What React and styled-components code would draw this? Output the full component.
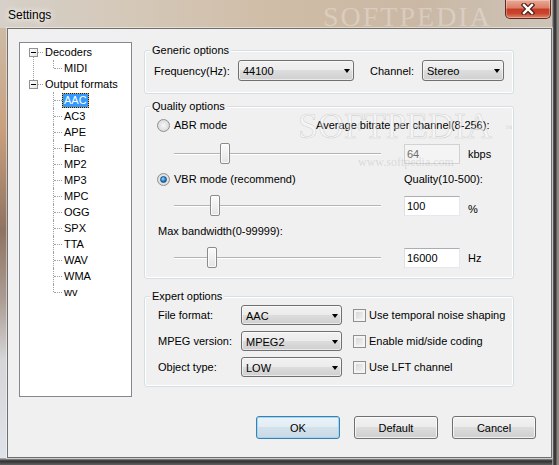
import React from 'react'
import styled, { createGlobalStyle, css } from 'styled-components'

const GlobalStyle = createGlobalStyle`
  html, body {
    margin: 0;
    padding: 0;
  }
  body {
    font-family: "Liberation Sans", Arial, sans-serif;
    font-size: 11px;
    color: #000;
  }
`

const treeData = [
  { label: 'Decoders', children: ['MIDI'] },
  {
    label: 'Output formats',
    children: ['AAC', 'AC3', 'APE', 'Flac', 'MP2', 'MP3', 'MPC', 'OGG', 'SPX', 'TTA', 'WAV', 'WMA', 'wv'],
  },
]

const faceGradient = 'linear-gradient(180deg, #f2f2f2 0%, #ebebeb 50%, #dddddd 50%, #cfcfcf 100%)'

const Window = styled.div`
  position: relative;
  width: 559px;
  height: 465px;
  box-sizing: border-box;
  padding: 0 7px 7px 7px;
  display: flex;
  flex-direction: column;
  overflow: hidden;
  background:
    linear-gradient(90deg, transparent 552px, #b3aca6 552px, #3a3a3a 554px, #3a3a3a 556px, #8f8883 557px),
    linear-gradient(180deg, transparent 458px, #bdbdbd 458px, #2f2f2f 461px, #626262 465px),
    linear-gradient(90deg, #d6d0c8 0%, #d4c7b7 25%, #cfbca6 50%, #cab8a5 75%, #cdc4b9 100%) top / 100% 28px no-repeat,
    linear-gradient(180deg, #cdbba6 28px, #c9a07e 130px, #8f7361 230px, #ab9d93 300px, #d6d5d8 360px, #dfe3ea 458px);
`

const TitleBar = styled.div`
  height: 28px;
  display: flex;
  align-items: flex-start;
  justify-content: space-between;
`

const Title = styled.span`
  padding: 2px 0 0 1px;
  line-height: 26px;
  font-size: 12px;
  color: #000;
  text-shadow: 0 0 6px #fff, 0 0 10px rgba(255, 255, 255, 0.8);
`

const CloseButton = styled.div`
  width: 46px;
  height: 19px;
  margin-right: 1px;
  box-sizing: border-box;
  border: 1px solid #5d2a22;
  border-top: none;
  border-radius: 0 0 5px 5px;
  background: linear-gradient(180deg, #e9a996 0%, #dc7d66 45%, #c43b22 50%, #c9472f 75%, #e0866b 100%);
  box-shadow: inset 0 0 0 1px rgba(255, 255, 255, 0.3);
  display: flex;
  align-items: center;
  justify-content: center;
`

const Watermark = styled.div`
  position: absolute;
  left: ${(p) => p.$x}px;
  top: ${(p) => p.$y}px;
  font-family: "Liberation Serif", serif;
  font-size: ${(p) => p.$size}px;
  line-height: 1.15;
  letter-spacing: ${(p) => p.$spacing || 0}px;
  color: ${(p) => p.$color};
  pointer-events: none;
  white-space: nowrap;
  ${(p) =>
    p.$stroke &&
    css`
      -webkit-text-stroke: 0.6px rgba(170, 170, 170, 0.45);
    `}
`

const Client = styled.div`
  flex: 1;
  background: #f0f0f0;
  border: 1px solid #6f6f6f;
  box-shadow: 0 0 0 1px rgba(255, 255, 255, 0.45);
  padding: 13px 0 0 11px;
  display: grid;
  grid-template-columns: 113px 370px 1fr;
  grid-template-rows: 355px auto;
  column-gap: 12px;
  row-gap: 19px;
  align-content: start;
`

const Tree = styled.div`
  background: #fff;
  border: 1px solid #828790;
  padding-top: 1px;
`

const RootNode = styled.div`
  position: relative;

  ${(p) =>
    !p.$last &&
    css`
      &::before {
        content: '';
        position: absolute;
        left: 13px;
        top: 13px;
        height: 23px;
        border-left: 1px dotted #a0a0a0;
      }
    `}
`

const RootRow = styled.div`
  height: 16px;
  display: flex;
  align-items: center;
  padding-left: 9px;
`

const Expander = styled.span`
  width: 9px;
  height: 9px;
  box-sizing: border-box;
  border: 1px solid #919191;
  background: linear-gradient(135deg, #ffffff, #e6e6e6);
  display: flex;
  align-items: center;
  justify-content: center;

  &::after {
    content: '';
    width: 5px;
    height: 1px;
    background: #000;
  }
`

const Connector = styled.span`
  width: 5px;
  border-top: 1px dotted #a0a0a0;
`

const NodeLabel = styled.span`
  padding: 0 1px;
  line-height: 13px;
  border: 1px solid transparent;
  white-space: nowrap;

  ${(p) =>
    p.$selected &&
    css`
      color: #fff;
      border: 1px dotted #1a1a1a;
      background: linear-gradient(#3399ff, #3399ff) padding-box, #d9b250 border-box;
    `}
`

const ChildItem = styled.div`
  position: relative;
  height: 16px;
  display: flex;
  align-items: center;
  padding-left: 42px;

  &::before {
    content: '';
    position: absolute;
    left: 33px;
    top: 0;
    height: ${(p) => (p.$last ? 8 : 16)}px;
    border-left: 1px dotted #a0a0a0;
  }

  &::after {
    content: '';
    position: absolute;
    left: 34px;
    top: 8px;
    width: 8px;
    border-top: 1px dotted #a0a0a0;
  }
`

const Column = styled.div`
  display: flex;
  flex-direction: column;
`

const Group = styled.div`
  margin-top: ${(p) => p.$gap}px;
  border: 1px solid #d5dfe5;
  border-radius: 3px;
  box-shadow: inset 0 0 0 1px #fff;
`

const GroupTitle = styled.div`
  display: table;
  margin: -8px 0 0 5px;
  padding: 0 2px;
  line-height: 14px;
  background: #f0f0f0;
`

const GenericBody = styled.div`
  display: flex;
  align-items: center;
  padding: 3px 9px 12px 9px;
`

const FieldLabel = styled.span`
  flex-shrink: 0;
  width: ${(p) => p.$w}px;
  margin-left: ${(p) => p.$ml || 0}px;
  white-space: nowrap;
`

const Combo = styled.div`
  flex-shrink: 0;
  width: ${(p) => p.$w}px;
  height: ${(p) => p.$h}px;
  box-sizing: border-box;
  border: 1px solid #707070;
  border-radius: 3px;
  background: ${faceGradient};
  box-shadow: inset 0 0 0 1px rgba(255, 255, 255, 0.55);
  display: flex;
  align-items: center;
  justify-content: space-between;
  padding: 1px 3px 0 4px;

  &::after {
    content: '';
    width: 0;
    height: 0;
    border-left: 3.5px solid transparent;
    border-right: 3.5px solid transparent;
    border-top: 4px solid #000;
  }
`

const QualityBody = styled.div`
  padding: 5px 8px 10px 12px;
`

const OptionRow = styled.div`
  display: flex;
  align-items: center;
  height: 14px;
  margin-top: ${(p) => p.$mt || 0}px;
  padding-left: ${(p) => p.$pl || 0}px;
  white-space: nowrap;
`

const RadioOption = styled.label`
  flex-shrink: 0;
  width: ${(p) => p.$w}px;
  display: flex;
  align-items: center;
  gap: 4px;
`

const Radio = styled.span`
  width: 13px;
  height: 13px;
  box-sizing: border-box;
  border-radius: 50%;
  border: 1px solid #8e8f8f;
  background: radial-gradient(circle at 50% 50%, #f6f6f6 0, #e4e4e4 50%, #cfcfcf 100%);
  display: flex;
  align-items: center;
  justify-content: center;

  ${(p) =>
    p.$checked &&
    css`
      &::after {
        content: '';
        width: 7px;
        height: 7px;
        box-sizing: border-box;
        border-radius: 50%;
        border: 1px solid #1c5180;
        background: radial-gradient(circle at 40% 35%, #9fdcff 0, #2a8ee0 45%, #0b3e7a 100%);
      }
    `}
`

const SliderRow = styled.div`
  display: flex;
  align-items: center;
  height: 21px;
  margin-top: ${(p) => p.$mt}px;
`

const Slider = styled.div`
  width: 207px;
  height: 21px;
  margin-left: 17px;
  display: flex;
  align-items: center;
  background: linear-gradient(
    180deg,
    transparent 10px,
    #b4b4b4 10px,
    #b4b4b4 11px,
    #ffffff 11px,
    #ffffff 12px,
    transparent 12px
  );
`

const Thumb = styled.span`
  width: 10px;
  height: 21px;
  margin-left: ${(p) => p.$pos}px;
  box-sizing: border-box;
  border: 1px solid #8b8b8b;
  border-radius: 2px;
  background: linear-gradient(180deg, #fbfbfb, #e4e4e4);
  box-shadow: inset 0 0 0 1px rgba(255, 255, 255, 0.8);
`

const ValueBox = styled.div`
  width: 56px;
  height: 20px;
  margin-left: 23px;
  box-sizing: border-box;
  border: 1px solid #e3e9ef;
  border-top-color: #abadb3;
  border-left-color: #dbdfe6;
  padding-left: 2px;
  line-height: 18px;
  background: #fff;

  ${(p) =>
    p.$disabled &&
    css`
      background: #f4f4f4;
      color: #6d6d6d;
      border-color: #d2d2d2;
    `}
`

const Unit = styled.span`
  margin-left: 8px;
  position: relative;
  top: ${(p) => p.$drop || 0}px;
`

const ExpertBody = styled.div`
  display: grid;
  grid-template-columns: 83px 101px auto;
  row-gap: 6px;
  align-items: center;
  padding: 2px 0 9px 13px;
`

const CheckOption = styled.label`
  display: flex;
  align-items: center;
  gap: 3px;
  margin-left: 11px;
  white-space: nowrap;
`

const Checkbox = styled.span`
  width: 13px;
  height: 13px;
  box-sizing: border-box;
  border: 1px solid #8e8f8f;
  background: linear-gradient(135deg, #cfd2d6, #f7f7f7);
  box-shadow: inset 0 0 0 2px #f4f4f4;
`

const ButtonRow = styled.div`
  grid-column: 1 / -1;
  display: flex;
  justify-content: flex-end;
  gap: 14px;
  padding-right: 15px;
`

const Button = styled.div`
  width: 84px;
  height: 23px;
  box-sizing: border-box;
  border: 1px solid ${(p) => (p.$default ? '#3c7fb1' : '#707070')};
  border-radius: 3px;
  background: ${(p) =>
    p.$default
      ? 'linear-gradient(180deg, #eaf3f8 0%, #e1ecf3 50%, #d3e1eb 50%, #c9d9e5 100%)'
      : faceGradient};
  box-shadow: inset 0 0 0 1px ${(p) => (p.$default ? '#9dd8f6' : 'rgba(255, 255, 255, 0.7)')};
  display: flex;
  align-items: center;
  justify-content: center;
`

function CloseIcon() {
  return (
    <svg width='14' height='12' viewBox='0 0 14 12'>
      <path d='M3 2 L11 10 M11 2 L3 10' stroke='#4a2018' strokeWidth='4.6' strokeLinecap='square' />
      <path d='M3 2 L11 10 M11 2 L3 10' stroke='#ffffff' strokeWidth='2.4' strokeLinecap='square' />
    </svg>
  )
}

function TreeView() {
  return (
    <Tree>
      {treeData.map((node, i) => (
        <RootNode key={node.label} $last={i === treeData.length - 1}>
          <RootRow>
            <Expander />
            <Connector />
            <NodeLabel>{node.label}</NodeLabel>
          </RootRow>
          {node.children.map((child, j) => (
            <ChildItem key={child} $last={j === node.children.length - 1}>
              <NodeLabel $selected={child === 'AAC'}>{child}</NodeLabel>
            </ChildItem>
          ))}
        </RootNode>
      ))}
    </Tree>
  )
}

function SliderField({ mt, pos, value, unit, disabled, drop }) {
  return (
    <SliderRow $mt={mt}>
      <Slider>
        <Thumb $pos={pos} />
      </Slider>
      <ValueBox $disabled={disabled}>{value}</ValueBox>
      <Unit $drop={drop}>{unit}</Unit>
    </SliderRow>
  )
}

const expertRows = [
  { label: 'File format:', value: 'AAC', check: 'Use temporal noise shaping' },
  { label: 'MPEG version:', value: 'MPEG2', check: 'Enable mid/side coding' },
  { label: 'Object type:', value: 'LOW', check: 'Use LFT channel' },
]

export default function App() {
  return (
    <>
      <GlobalStyle />
      <Window>
        <TitleBar>
          <Title>Settings</Title>
          <CloseButton>
            <CloseIcon />
          </CloseButton>
        </TitleBar>

        <Client>
          <TreeView />

          <Column>
            <Group $gap={8}>
              <GroupTitle>Generic options</GroupTitle>
              <GenericBody>
                <FieldLabel $w={84}>Frequency(Hz):</FieldLabel>
                <Combo $w={116} $h={21}>44100</Combo>
                <FieldLabel $w={52} $ml={16}>Channel:</FieldLabel>
                <Combo $w={82} $h={21}>Stereo</Combo>
              </GenericBody>
            </Group>

            <Group $gap={12}>
              <GroupTitle>Quality options</GroupTitle>
              <QualityBody>
                <OptionRow>
                  <RadioOption $w={159}>
                    <Radio />
                    ABR mode
                  </RadioOption>
                  Average bitrate per channel(8-256):
                </OptionRow>
                <SliderField mt={11} pos={46} value='64' unit='kbps' disabled />
                <OptionRow $mt={8}>
                  <RadioOption $w={247}>
                    <Radio $checked />
                    VBR mode (recommend)
                  </RadioOption>
                  Quality(10-500):
                </OptionRow>
                <SliderField mt={9} pos={36} value='100' unit='%' drop={3} />
                <OptionRow $mt={8} $pl={1}>
                  Max bandwidth(0-99999):
                </OptionRow>
                <SliderField mt={9} pos={33} value='16000' unit='Hz' />
              </QualityBody>
            </Group>

            <Group $gap={17}>
              <GroupTitle>Expert options</GroupTitle>
              <ExpertBody>
                {expertRows.map((row) => (
                  <React.Fragment key={row.label}>
                    <span>{row.label}</span>
                    <Combo $w={101} $h={20}>{row.value}</Combo>
                    <CheckOption>
                      <Checkbox />
                      {row.check}
                    </CheckOption>
                  </React.Fragment>
                ))}
              </ExpertBody>
            </Group>
          </Column>

          <ButtonRow>
            <Button $default>OK</Button>
            <Button>Default</Button>
            <Button>Cancel</Button>
          </ButtonRow>
        </Client>

        <Watermark $x={323} $y={1} $size={28} $spacing={2} $color='rgba(255, 255, 255, 0.28)'>
          SOFTPEDIA
        </Watermark>
        <Watermark $x={298} $y={106} $size={36} $color='rgba(255, 255, 255, 0.4)' $stroke>
          SOFTPEDIA
        </Watermark>
        <Watermark $x={505} $y={124} $size={8} $color='rgba(170, 170, 170, 0.4)'>
          ™
        </Watermark>
        <Watermark $x={358} $y={156} $size={12} $color='rgba(160, 160, 160, 0.3)'>
          www.softpedia.com
        </Watermark>
      </Window>
    </>
  )
}
